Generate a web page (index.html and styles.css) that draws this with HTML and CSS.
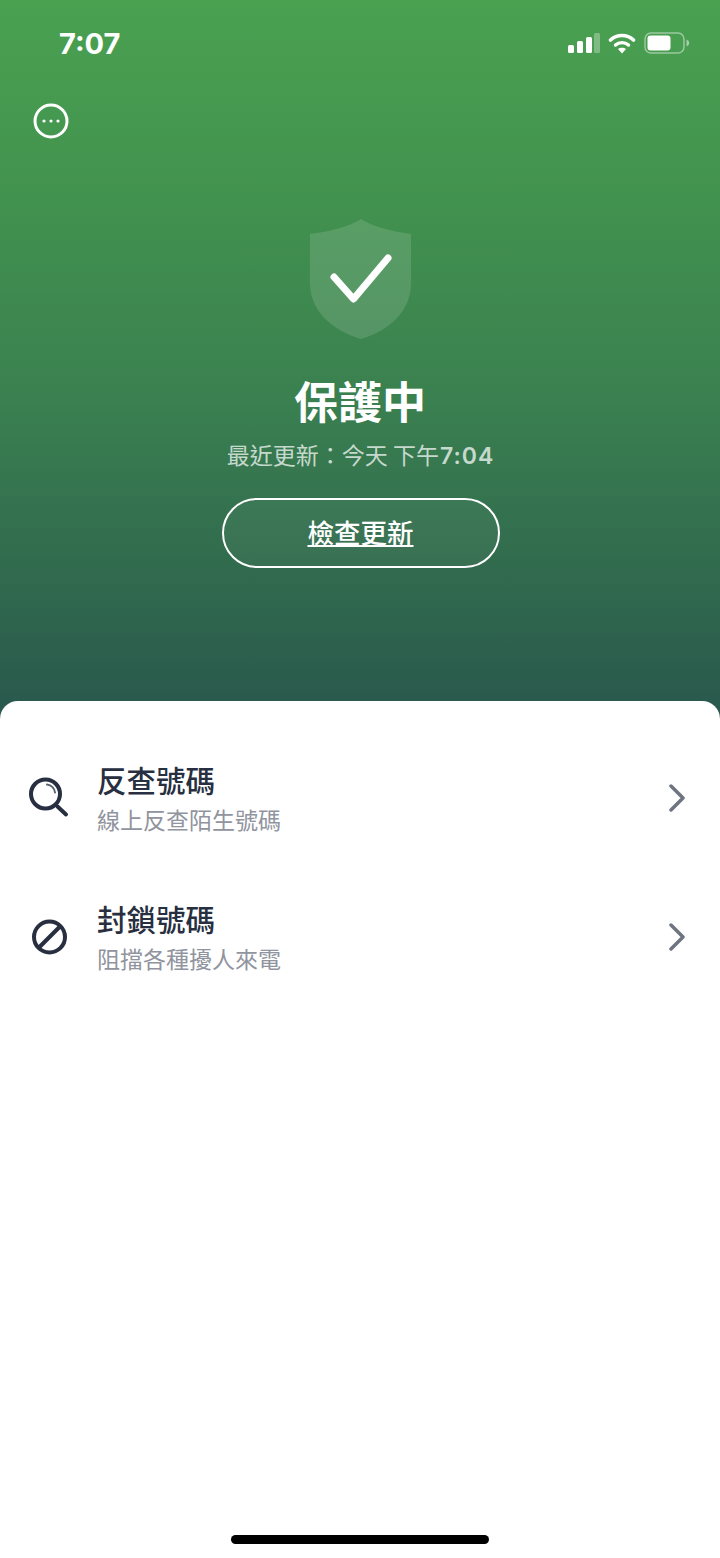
FILE: index.html
```html
<!DOCTYPE html>
<html lang="zh-Hant">
<head>
    <meta charset="UTF-8">
    <meta name="viewport" content="width=device-width, initial-scale=1.0">
    <title>保護中</title>
    <link rel="stylesheet" href="styles.css">
</head>
<body>
    <div class="screen">
        <div class="hero">
            <div class="status">
                <span class="time">7:07</span>
                <div class="status-icons">
                    <svg class="signal" width="32" height="20" viewBox="0 0 32 20">
                        <rect x="0" y="12" width="6" height="8" rx="1.5" fill="#fff"/>
                        <rect x="9" y="8" width="6" height="12" rx="1.5" fill="#fff"/>
                        <rect x="18" y="4" width="6" height="16" rx="1.5" fill="#fff"/>
                        <rect x="26" y="0" width="6" height="20" rx="1.5" fill="#fff" opacity="0.3"/>
                    </svg>
                    <svg class="wifi" width="28" height="22" viewBox="0 0 28 22">
                        <path d="M2.500 8 C9 2 19 2 25.500 8" fill="none" stroke="#fff" stroke-width="3.600" stroke-linecap="round"/>
                        <path d="M7.500 13 C11 9.800 17 9.800 20.500 13" fill="none" stroke="#fff" stroke-width="3.400" stroke-linecap="round"/>
                        <path d="M14 21.500 L10 17 C12 15.200 16 15.200 18 17 Z" fill="#fff"/>
                    </svg>
                    <svg class="battery" width="46" height="22" viewBox="0 0 46 22">
                        <rect x="1" y="1" width="39" height="20" rx="6" fill="none" stroke="#fff" stroke-width="1.500" opacity="0.45"/>
                        <rect x="3.500" y="3.500" width="23" height="15" rx="3" fill="#fff"/>
                        <path d="M42.500 7.500 C44.500 8.200 45.200 9.500 45.200 11 C45.200 12.500 44.500 13.800 42.500 14.500 Z" fill="#fff" opacity="0.5"/>
                    </svg>
                </div>
            </div>
            <div class="toolbar">
                <svg width="36" height="36" viewBox="0 0 36 36">
                    <circle cx="18" cy="18" r="16" fill="none" stroke="#fff" stroke-width="3"/>
                    <circle cx="11" cy="18" r="1.600" fill="#fff"/>
                    <circle cx="18" cy="18" r="1.600" fill="#fff"/>
                    <circle cx="25" cy="18" r="1.600" fill="#fff"/>
                </svg>
            </div>
            <svg class="shield" width="102" height="122" viewBox="0 0 102 122">
                <path d="M51 0 C62 7 79 12 101 15 L101 64 C101 92 80 111 51 120 C22 111 0 92 0 64 L0 15 C23 12 40 7 51 0 Z" fill="#fff" fill-opacity="0.13"/>
                <path d="M24 58 L43.500 80 L78 39" fill="none" stroke="#fff" stroke-width="7" stroke-linecap="round" stroke-linejoin="round"/>
            </svg>
            <h1 class="hero-title">保護中</h1>
            <p class="hero-sub">最近更新：今天 下午<b>7:04</b></p>
            <a class="update-btn" href="#">檢查更新</a>
        </div>
        <div class="sheet">
            <div class="row">
                <svg class="row-icon" width="44" height="44" viewBox="0 0 44 44">
                    <circle cx="17.500" cy="18" r="14.500" fill="none" stroke="#272f40" stroke-width="4"/>
                    <path d="M19 8.500 C23.500 9 26.500 12.500 27 16.500" fill="none" stroke="#5b6270" stroke-width="2" stroke-linecap="round"/>
                    <path d="M29.500 30.500 L38 38.500" stroke="#272f40" stroke-width="4" stroke-linecap="round"/>
                </svg>
                <div class="row-text">
                    <div class="row-title">反查號碼</div>
                    <div class="row-sub">線上反查陌生號碼</div>
                </div>
                <svg class="chevron" width="18" height="28" viewBox="0 0 18 28">
                    <path d="M3 2 L15 14 L3 26" fill="none" stroke="#6e7480" stroke-width="3.500" stroke-linecap="round" stroke-linejoin="round"/>
                </svg>
            </div>
            <div class="row">
                <svg class="row-icon" width="44" height="44" viewBox="0 0 44 44">
                    <circle cx="21.500" cy="22" r="15.500" fill="none" stroke="#272f40" stroke-width="4"/>
                    <path d="M10.500 33 L32.500 11" stroke="#272f40" stroke-width="4"/>
                </svg>
                <div class="row-text">
                    <div class="row-title">封鎖號碼</div>
                    <div class="row-sub">阻擋各種擾人來電</div>
                </div>
                <svg class="chevron" width="18" height="28" viewBox="0 0 18 28">
                    <path d="M3 2 L15 14 L3 26" fill="none" stroke="#6e7480" stroke-width="3.500" stroke-linecap="round" stroke-linejoin="round"/>
                </svg>
            </div>
            <div class="home-bar"></div>
        </div>
    </div>
</body>
</html>
```

FILE: styles.css
```css
* {
    box-sizing: border-box;
}
body {
    margin: 0;
    font-family: "Noto Sans CJK TC", "Noto Sans", sans-serif;
}
.screen {
    width: 720px;
    height: 1558px;
    display: flex;
    flex-direction: column;
    background: linear-gradient(#4aa150 0, #42924f 200px, #3a8050 400px, #2a5a4d 700px);
    overflow: hidden;
}
.hero {
    height: 701px;
    display: flex;
    flex-direction: column;
    align-items: center;
    color: #fff;
}
.status {
    width: 100%;
    height: 86px;
    display: flex;
    align-items: center;
    justify-content: space-between;
    padding: 0 30px 0 59px;
}
.time {
    font-family: Inter, sans-serif;
    font-size: 29px;
    font-weight: 700;
}
.status-icons {
    display: flex;
    align-items: center;
    gap: 8px;
}
.toolbar {
    width: 100%;
    padding: 17px 0 0 33px;
    height: 133px;
}
.shield {
    display: block;
    margin-left: 1px;
}
.hero-title {
    margin: 34px 0 0;
    font-size: 44px;
    line-height: 50px;
    font-weight: 700;
}
.hero-sub {
    margin: 13px 0 0 1px;
    font-size: 23px;
    line-height: 32px;
    color: rgba(255, 255, 255, 0.72);
}
.hero-sub b {
    margin-left: 1px;
    font-family: Inter, sans-serif;
    font-weight: 600;
    letter-spacing: 1px;
}
.update-btn {
    width: 278px;
    height: 70px;
    margin-top: 26px;
    margin-left: 1px;
    display: flex;
    align-items: center;
    justify-content: center;
    border: 2px solid #fff;
    border-radius: 35px;
    background: rgba(255, 255, 255, 0.04);
    color: #fff;
    font-size: 26.500px;
    font-weight: 500;
    padding-bottom: 3px;
}
.sheet {
    flex: 1;
    display: flex;
    flex-direction: column;
    background: #fff;
    border-radius: 18px 18px 0 0;
    padding-top: 27px;
}
.row {
    height: 139px;
    display: flex;
    align-items: center;
    padding: 0 34px 0 28px;
}
.row-icon {
    flex: none;
}
.row-text {
    flex: 1;
    margin-left: 26px;
}
.row-title {
    font-size: 29.500px;
    line-height: 38px;
    font-weight: 500;
    color: #272f40;
    margin-left: -1px;
}
.row-sub {
    font-size: 23px;
    line-height: 34px;
    color: #90949e;
    margin-left: -1px;
    margin-top: 4px;
}
.home-bar {
    width: 258px;
    height: 9px;
    margin: auto auto 14px;
    border-radius: 5px;
    background: #000;
}
```
